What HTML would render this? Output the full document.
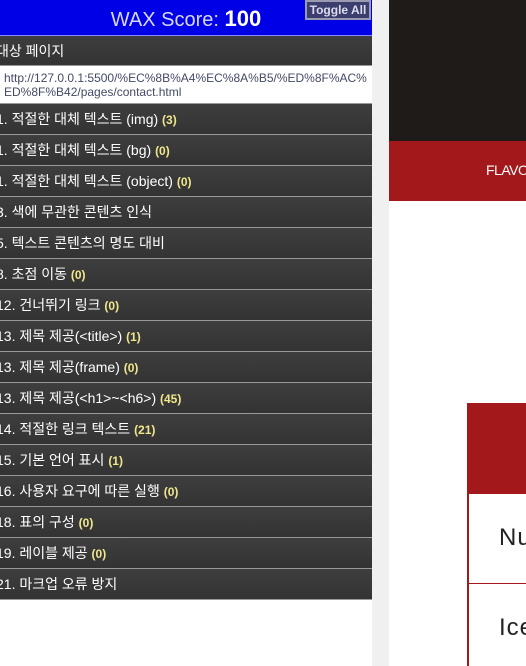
<!DOCTYPE html>
<html><head><meta charset="utf-8"><style>
*{margin:0;padding:0;box-sizing:border-box}
html,body{width:526px;height:666px;overflow:hidden}
body{background:#fff;font-family:"Liberation Sans","Noto Sans CJK KR",sans-serif;position:relative}
#panel{position:absolute;left:0;top:0;width:372px;height:666px;background:#fff}
#hdr{height:36px;background:#0000e6;color:#d8d8ff;font-size:20px;text-align:center;line-height:38px;border-bottom:1px solid #8888ff}
#hdr b{color:#fff;font-size:22px}
#tog{position:absolute;left:305px;top:0;width:66px;height:20px;background:#3c3f6e;border:2px solid #9a9ab0;color:#dcdcf0;font-size:12px;font-weight:bold;text-align:center;line-height:16px}
.row{height:31px;background:linear-gradient(#3e3e3e,#333);color:#fff;font-size:14px;line-height:30px;border-bottom:1px solid #999;white-space:nowrap;overflow:hidden;text-indent:-4px}
.row span{color:#f0e68c;font-size:12px;font-weight:bold}
#url{height:38px;background:#fff;color:#444a66;font-size:12px;line-height:14px;padding:5px 4px;border-bottom:1px solid #999;word-break:break-all}
#sb{position:absolute;left:372px;top:0;width:17px;height:666px;background:#f0f0f0}
#dark{position:absolute;left:389px;top:0;width:137px;height:141px;background:#1f1b18}
#red{position:absolute;left:389px;top:141px;width:137px;height:60px;background:#a3181a;color:#fff;font-size:14px;line-height:58px;padding-left:97px;letter-spacing:-0.5px}
#tbl{position:absolute;left:467px;top:403px;width:70px;height:263px;border-left:2px solid #a3181a;overflow:hidden}
#th{height:91px;background:#a3181a}
.td{height:90px;border-bottom:1px solid #a3181a;font-size:24px;color:#222;padding:30px 0 0 30px;letter-spacing:1px}
</style></head><body>
<div id="panel">
<div id="hdr">WAX Score: <b>100</b></div>
<div id="tog">Toggle All</div>
<div class="row" style="height:30px">대상 페이지</div>
<div id="url">http://127.0.0.1:5500/%EC%8B%A4%EC%8A%B5/%ED%8F%AC%ED%8F%B42/pages/contact.html</div>
<div class="row">1. 적절한 대체 텍스트 (img) <span>(3)</span></div>
<div class="row">1. 적절한 대체 텍스트 (bg) <span>(0)</span></div>
<div class="row">1. 적절한 대체 텍스트 (object) <span>(0)</span></div>
<div class="row">3. 색에 무관한 콘텐츠 인식</div>
<div class="row">5. 텍스트 콘텐츠의 명도 대비</div>
<div class="row">8. 초점 이동 <span>(0)</span></div>
<div class="row">12. 건너뛰기 링크 <span>(0)</span></div>
<div class="row">13. 제목 제공(&lt;title&gt;) <span>(1)</span></div>
<div class="row">13. 제목 제공(frame) <span>(0)</span></div>
<div class="row">13. 제목 제공(&lt;h1&gt;~&lt;h6&gt;) <span>(45)</span></div>
<div class="row">14. 적절한 링크 텍스트 <span>(21)</span></div>
<div class="row">15. 기본 언어 표시 <span>(1)</span></div>
<div class="row">16. 사용자 요구에 따른 실행 <span>(0)</span></div>
<div class="row">18. 표의 구성 <span>(0)</span></div>
<div class="row">19. 레이블 제공 <span>(0)</span></div>
<div class="row">21. 마크업 오류 방지</div>
</div>
<div id="sb"></div>
<div id="dark"></div>
<div id="red">FLAVO</div>
<div id="tbl"><div id="th"></div><div class="td">Nu</div><div class="td">Ice</div></div>
</body></html>
